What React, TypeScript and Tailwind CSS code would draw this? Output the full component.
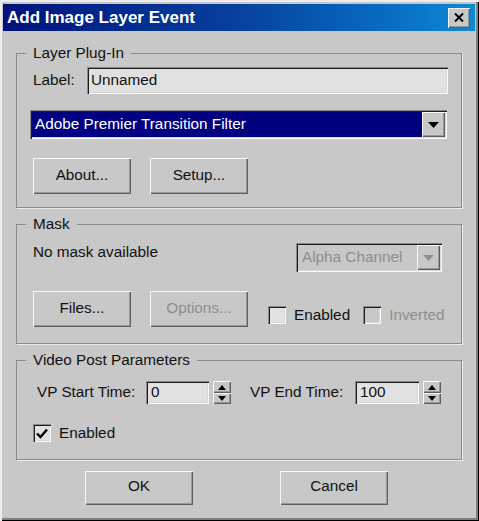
import React from 'react'

const raised =
  'shadow-[inset_1px_1px_0_#f6f6f6,inset_-1px_-1px_0_#5e5e5e,inset_-2px_-2px_0_#999]'
const sunken =
  'shadow-[inset_1px_1px_0_#8a8a8a,inset_2px_2px_0_#1c1c1c,inset_-1px_-1px_0_#fafafa,inset_-2px_-2px_0_#d8d8d8]'

function Btn({ label, disabled, w = 'w-[98px]', h = 'h-[36px]' }: { label: string; disabled?: boolean; w?: string; h?: string }) {
  return (
    <div
      className={`${w} ${h} ${raised} flex items-center justify-center pb-[2px] bg-[#c8c8c8] ${
        disabled ? 'text-[#8e8e8e]' : 'text-[#111]'
      }`}
    >
      {label}
    </div>
  )
}

function Arrow({ disabled }: { disabled?: boolean }) {
  return (
    <svg width="11" height="6" viewBox="0 0 11 6">
      <path d="M0 0h11L5.5 6z" fill={disabled ? '#8e8e8e' : '#000'} />
    </svg>
  )
}

function Check({ label, checked, disabled }: { label: string; checked?: boolean; disabled?: boolean }) {
  return (
    <div className="flex items-center">
      <div
        className={`w-[18px] h-[18px] ${sunken} flex items-center justify-center ${
          disabled ? 'bg-[#c8c8c8]' : 'bg-[#e2e2e2]'
        }`}
      >
        {checked && (
          <svg width="12" height="11" viewBox="0 0 12 11">
            <path d="M1 5.5l3.5 3.5L11 1.5" stroke="#000" strokeWidth="2.4" fill="none" />
          </svg>
        )}
      </div>
      <span className={`ml-[8px] ${disabled ? 'text-[#8e8e8e]' : 'text-[#111]'}`}>{label}</span>
    </div>
  )
}

function Spinner() {
  return (
    <div className="w-[18px] h-[23px] flex flex-col">
      <div className={`h-[12px] ${raised} flex items-center justify-center`}>
        <svg width="8" height="5" viewBox="0 0 8 5">
          <path d="M0 5h8L4 0z" fill="#000" />
        </svg>
      </div>
      <div className={`h-[11px] ${raised} flex items-center justify-center`}>
        <svg width="8" height="5" viewBox="0 0 8 5">
          <path d="M0 0h8L4 5z" fill="#000" />
        </svg>
      </div>
    </div>
  )
}

function Group({ title, children, pb }: { title: string; children: React.ReactNode; pb: string }) {
  return (
    <fieldset className={`ml-[16px] w-[446px] border border-[#8a8a8a] shadow-[1px_1px_0_#ececec] ${pb}`}>
      <legend className="ml-[9px] px-[7px] leading-[18px]">{title}</legend>
      {children}
    </fieldset>
  )
}

export default function App() {
  return (
    <div className="w-[479px] h-[521px] bg-[#c8c8c8] text-[15.3px] font-['Liberation_Sans',Arial,sans-serif] text-[#111] shadow-[inset_2px_2px_0_#ececec,inset_-1px_-1px_0_#000,inset_-3px_-3px_0_#808080] pt-[4px] pl-[3px] pr-[4px] overflow-hidden">
      <div className="h-[27px] bg-gradient-to-r from-[#02107c] via-[#0840a0] to-[#1088d4] flex items-center justify-between pl-[4px] pr-[5px]">
        <span className="text-white font-bold text-[17px]">Add Image Layer Event</span>
        <div className={`w-[22px] h-[20px] bg-[#c8c8c8] ${raised} flex items-center justify-center`}>
          <svg width="10" height="9" viewBox="0 0 10 9">
            <path d="M1 0.5l8 8M9 0.5l-8 8" stroke="#000" strokeWidth="2" />
          </svg>
        </div>
      </div>

      <div className="-ml-[3px] mt-[13px]">
        <Group title="Layer Plug-In" pb="pb-[13px]">
          <div className="mt-[5px] ml-[16px] flex items-center h-[27px]">
            <span className="w-[54px]">Label:</span>
            <div className={`w-[361px] h-[27px] bg-[#e1e1e1] ${sunken} flex items-center pl-[4px]`}>
              Unnamed
            </div>
          </div>
          <div className={`mt-[16px] ml-[13px] w-[417px] h-[29px] ${sunken} bg-[#c8c8c8] flex items-stretch p-[2px]`}>
            <div className="flex-1 bg-[#000080] text-white flex items-center pl-[3px]">
              Adobe Premier Transition Filter
            </div>
            <div className={`w-[23px] ${raised} bg-[#c8c8c8] flex items-center justify-center`}>
              <Arrow />
            </div>
          </div>
          <div className="mt-[19px] ml-[16px] flex gap-[19px]">
            <Btn label="About..." />
            <Btn label="Setup..." />
          </div>
        </Group>

        <div className="mt-[7px]">
          <Group title="Mask" pb="pb-[16px]">
            <div className="mt-[10px] ml-[16px] flex items-start justify-between pr-[19px]">
              <span className="leading-[18px]">No mask available</span>
              <div className={`w-[146px] h-[29px] ${sunken} bg-[#c8c8c8] flex items-stretch p-[2px]`}>
                <div className="flex-1 text-[#8e8e8e] flex items-center pl-[4px]">Alpha Channel</div>
                <div className={`w-[23px] ${raised} bg-[#c8c8c8] flex items-center justify-center`}>
                  <Arrow disabled />
                </div>
              </div>
            </div>
            <div className="mt-[19px] ml-[16px] flex items-center">
              <Btn label="Files..." />
              <div className="ml-[19px]">
                <Btn label="Options..." disabled />
              </div>
              <div className="ml-[20px] mt-[12px]">
                <Check label="Enabled" />
              </div>
              <div className="ml-[13px] mt-[12px]">
                <Check label="Inverted" disabled />
              </div>
            </div>
          </Group>
        </div>

        <div className="mt-[7px]">
          <Group title="Video Post Parameters" pb="pb-[14px]">
            <div className="mt-[12px] ml-[20px] flex items-center h-[23px]">
              <span className="w-[109px]">VP Start Time:</span>
              <div className={`w-[63px] h-[23px] bg-[#e1e1e1] ${sunken} flex items-center pl-[5px]`}>0</div>
              <div className="ml-[4px]">
                <Spinner />
              </div>
              <span className="ml-[19px] w-[105px]">VP End Time:</span>
              <div className={`w-[64px] h-[23px] bg-[#e1e1e1] ${sunken} flex items-center pl-[5px]`}>100</div>
              <div className="ml-[4px]">
                <Spinner />
              </div>
            </div>
            <div className="mt-[18px] ml-[16px]">
              <Check label="Enabled" checked />
            </div>
          </Group>
        </div>

        <div className="mt-[11px] flex pl-[85px] gap-[87px]">
          <Btn label="OK" w="w-[108px]" h="h-[34px]" />
          <Btn label="Cancel" w="w-[108px]" h="h-[34px]" />
        </div>
      </div>
    </div>
  )
}
